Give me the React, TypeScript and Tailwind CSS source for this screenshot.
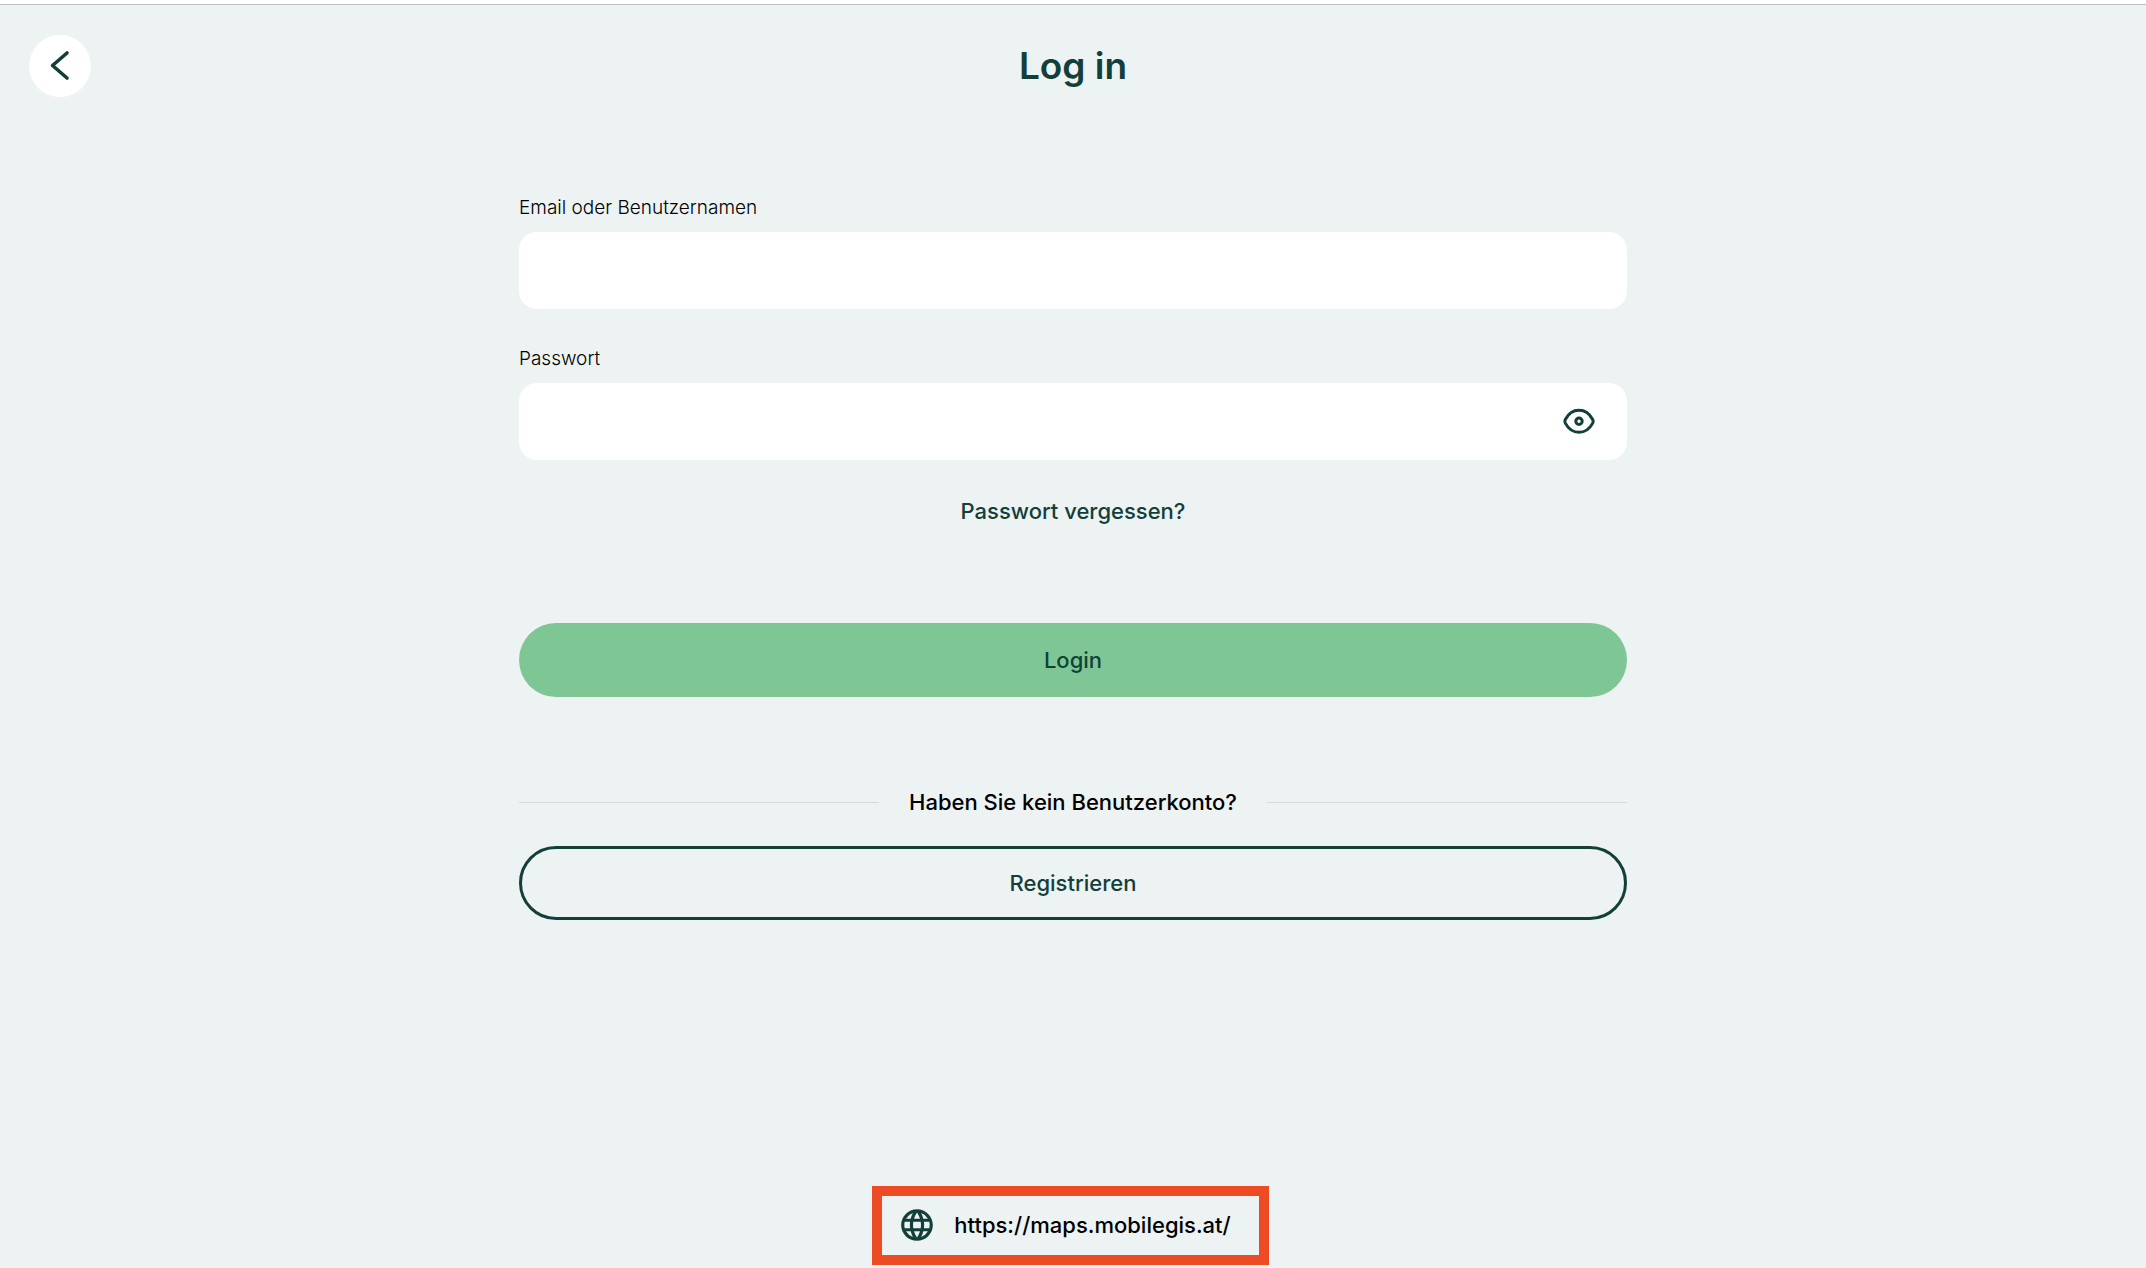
import { useState } from "react";
import { MdLanguage } from "react-icons/md";

function ChevronIcon() {
  return (
    <svg width="24" height="32" viewBox="0 0 24 32" fill="none" aria-hidden="true">
      <path d="M19 3 4.500 15.500 19 28" stroke="currentColor" strokeWidth="3.6" strokeLinecap="round" strokeLinejoin="round" />
    </svg>
  );
}

function EyeIcon() {
  return (
    <svg width="32" height="28" viewBox="0 0 32 28" fill="none" stroke="currentColor" strokeWidth="3" aria-hidden="true">
      <path
        d="M2.300 11.500C5.500 5.500 10.300 2.300 16 2.300S26.500 5.500 29.700 11.500C30.300 12.800 30.300 13.800 29.700 15.100C26.500 21.100 21.700 24.300 16 24.300S5.500 21.100 2.300 15.100C1.700 13.800 1.700 12.800 2.300 11.500Z"
        strokeLinejoin="round"
      />
      <circle cx="16" cy="13.3" r="3.2" />
    </svg>
  );
}

export default function App() {
  const [showPassword, setShowPassword] = useState(false);

  return (
    <div className="flex min-h-screen flex-col border-t-4 border-white bg-[#edf2f2] pb-[3px] font-['Inter',sans-serif] text-[#123f3a]">
      <header className="grid grid-cols-[1fr_auto_1fr] items-center border-t border-[#b9c1c0] px-[29px] pt-[30px]">
        <button type="button" aria-label="Zurück" className="flex size-[62px] items-center justify-center rounded-full bg-white">
          <ChevronIcon />
        </button>
        <h1 className="text-[37px] leading-[46px] font-semibold">Log in</h1>
      </header>

      <main className="mx-auto w-full max-w-[1108px] pt-[98px]">
        <form onSubmit={(e) => e.preventDefault()}>
          <label htmlFor="user" className="block text-[19px] leading-[26px] font-light text-black">
            Email oder Benutzernamen
          </label>
          <input id="user" type="text" className="mt-[11px] block h-[77px] w-full rounded-[18px] bg-white px-6 text-[22px]" />

          <label htmlFor="password" className="mt-[37px] block text-[19px] leading-[26px] font-light text-black">
            Passwort
          </label>
          <div className="mt-[11px] flex h-[77px] items-center rounded-[18px] bg-white pr-8 pl-6">
            <input
              id="password"
              type={showPassword ? "text" : "password"}
              className="h-full min-w-0 flex-1 bg-transparent text-[22px] outline-none"
            />
            <button type="button" aria-label="Passwort anzeigen" onClick={() => setShowPassword(!showPassword)}>
              <EyeIcon />
            </button>
          </div>

          <div className="mt-9 text-center text-[22px] leading-[30px] font-medium">
            <a href="#passwort">Passwort vergessen?</a>
          </div>

          <button type="submit" className="mt-[97px] block h-[74px] w-full rounded-full bg-[#7ec794] text-[22px] font-medium">
            Login
          </button>
        </form>

        <div className="mt-[90px] flex items-center gap-[30px]">
          <span className="h-px flex-1 bg-[#d8dada]" />
          <p className="text-[22px] leading-[30px] font-medium text-black">Haben Sie kein Benutzerkonto?</p>
          <span className="h-px flex-1 bg-[#d8dada]" />
        </div>
        <button type="button" className="mt-[29px] block h-[74px] w-full rounded-full border-3 border-[#123f3a] text-[22px] font-medium">
          Registrieren
        </button>
      </main>

      <footer className="mt-auto flex justify-center pr-[5px]">
        <a
          href="https://maps.mobilegis.at/"
          className="flex h-[79px] items-center gap-[18px] border-10 border-[#ed4b24] pr-7 pb-[2px] pl-4 text-[22px] leading-[30px] font-medium text-black"
        >
          <MdLanguage size={38} className="text-[#123f3a]" />
          https://maps.mobilegis.at/
        </a>
      </footer>
    </div>
  );
}
